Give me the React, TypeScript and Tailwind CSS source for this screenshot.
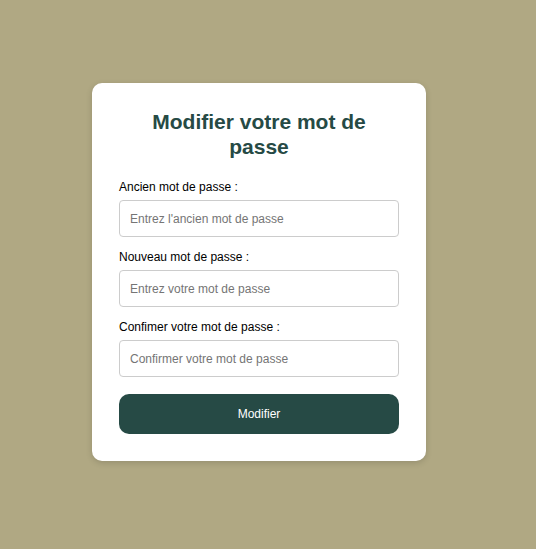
import React from "react";

export default function App() {
  const font = { fontFamily: '"Liberation Sans", Arial, sans-serif' };
  const fields = [
    { label: "Ancien mot de passe :", ph: "Entrez l'ancien mot de passe" },
    { label: "Nouveau mot de passe :", ph: "Entrez votre mot de passe" },
    { label: "Confimer votre mot de passe :", ph: "Confirmer votre mot de passe" },
  ];
  return (
    <div
      className="min-h-screen w-full bg-[#b0a883] pt-[83px] pb-[88px] flex justify-center pr-[18px]"
      style={font}
    >
      <div className="w-[334px] h-[378px] bg-white rounded-[10px] px-[27px] pt-[26px] pb-[27px] shadow-[0_2px_6px_rgba(0,0,0,0.15)]">
        <h2 className="text-center text-[21px] leading-[25px] font-bold text-[#264a45] mb-[21px] px-[20px]">
          Modifier votre mot de passe
        </h2>
        <form className="flex flex-col" onSubmit={(e) => e.preventDefault()}>
          {fields.map((f, i) => (
            <div key={i} className={i > 0 ? "mt-[13px]" : ""}>
              <label className="block text-[12px] leading-[14px] text-black mb-[6px]">{f.label}</label>
              <input
                type="password"
                placeholder={f.ph}
                className="block w-full h-[37px] border border-[#cccccc] rounded-[4px] px-[10px] text-[12px] placeholder:text-[#757575] outline-none"
              />
            </div>
          ))}
          <button
            type="submit"
            className="mt-[17px] h-[40px] w-full rounded-[10px] bg-[#264a45] text-white text-[12px]"
          >
            Modifier
          </button>
        </form>
      </div>
    </div>
  );
}
